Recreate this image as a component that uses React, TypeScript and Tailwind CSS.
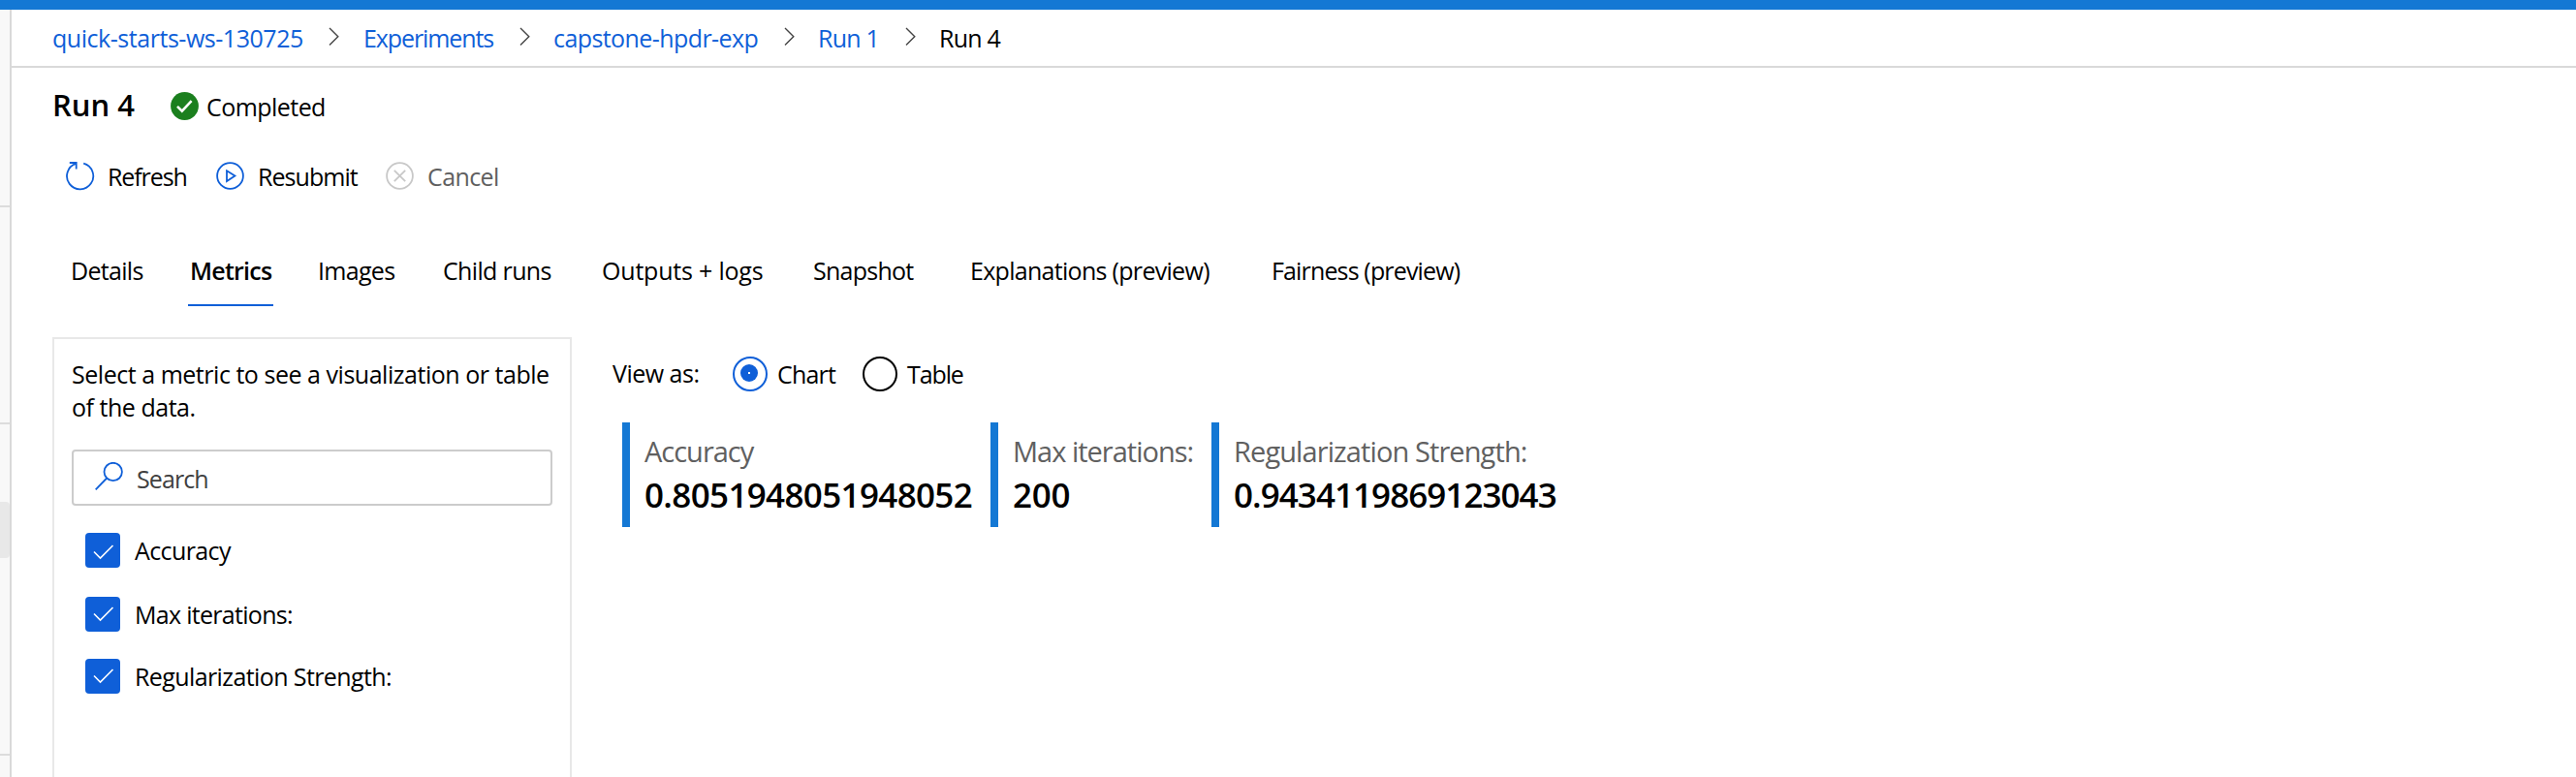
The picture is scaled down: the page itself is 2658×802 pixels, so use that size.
import React from "react";

function Chevron() {
  return (
    <svg className="w-3 h-5 shrink-0" viewBox="0 0 12 20" fill="none" stroke="#444" strokeWidth="1.4">
      <path d="M1 1 L9.8 9.8 L1 18.6" />
    </svg>
  );
}

function CheckBox({ low = false }: { low?: boolean }) {
  return (
    <div className="w-9 h-9 rounded-[4px] bg-[#0f5fd8] shrink-0">
      <svg className="w-9 h-9" viewBox="0 0 36 36" fill="none" stroke="#fff" strokeWidth="1.6">
        <path d={low ? "M9 19.5 L15.5 26 L28.5 13" : "M9 17.5 L15.5 24 L28.5 11"} />
      </svg>
    </div>
  );
}

export default function App() {
  return (
    <div className="w-[2658px] h-[802px] overflow-hidden bg-white text-black font-['Open_Sans','Noto_Sans',sans-serif] text-[25px] leading-[36px] whitespace-nowrap flex flex-col">
      <div className="h-[10px] bg-[#1478d4] shrink-0" />
      <div className="flex flex-1 min-h-0">
        <aside className="w-3 bg-[#f8f8f8] border-r-2 border-[#d9d9d9] shrink-0 flex flex-col">
          <div className="h-[204px] border-b-2 border-[#dcdcdc] shrink-0" />
          <div className="h-[224px] border-b-2 border-[#dcdcdc] shrink-0" />
          <div className="h-[58px] mt-20 rounded-r-[4px] bg-[#e8e8e8] shrink-0" />
          <div className="h-[204px] border-b-2 border-[#dcdcdc] shrink-0" />
        </aside>
        <div className="flex-1 flex flex-col min-w-0">
          <nav className="h-[60px] border-b-2 border-[#d9d9d9] pl-[42px] pt-[11px] flex shrink-0 text-[#0f5fd8]">
            <span className="w-[285px] tracking-[-0.46px]">quick-starts-ws-130725</span>
            <div className="w-[36px] pt-[7px]"><Chevron /></div>
            <span className="w-[161px] tracking-[-1.1px]">Experiments</span>
            <div className="w-[35px] pt-[7px]"><Chevron /></div>
            <span className="w-[238px] tracking-[-0.58px]">capstone-hpdr-exp</span>
            <div className="w-[35px] pt-[7px]"><Chevron /></div>
            <span className="w-[90px] tracking-[-0.8px]">Run 1</span>
            <div className="w-[35px] pt-[7px]"><Chevron /></div>
            <span className="text-black tracking-[-0.8px]">Run 4</span>
          </nav>
          <header className="h-[76px] pl-[42px] pt-[18px] flex shrink-0">
            <h1 className="w-[122px] text-[31px] leading-[40px] font-semibold">Run 4</h1>
            <svg className="w-[29px] h-[29px] mt-[7px] mr-[8px]" viewBox="0 0 29 29">
              <circle cx="14.5" cy="14.5" r="14.4" fill="#1b7f1e" />
              <path d="M7 14.8 L11.8 19.6 L21.6 9.2" fill="none" stroke="#fff" strokeWidth="2.6" />
            </svg>
            <span className="mt-[4px] tracking-[-0.55px]">Completed</span>
          </header>
          <div className="h-[84px] pl-[56px] pt-[18px] flex shrink-0">
            <svg className="w-[30px] h-[30px] mt-[3px] mr-[13px]" viewBox="0 0 30 30" fill="none" stroke="#0f5fd8" strokeWidth="1.8">
              <path d="M18.2 1.6 A13.6 13.6 0 1 1 10.4 1.8" />
              <path d="M3.8 1 H10.7 V7.4" />
            </svg>
            <span className="w-[112px] tracking-[-1.1px]">Refresh</span>
            <svg className="w-[29px] h-[29px] mt-[3px] mr-[14px]" viewBox="0 0 29 29" fill="none" stroke="#0f5fd8" strokeWidth="1.8">
              <circle cx="14.5" cy="14.5" r="13.4" />
              <path d="M11 9.3 L19.4 14.6 L11 20 Z" />
            </svg>
            <span className="w-[132px] tracking-[-0.95px]">Resubmit</span>
            <svg className="w-[29px] h-[29px] mt-[3px] mr-[14px]" viewBox="0 0 29 29" fill="none" stroke="#c8c8c8" strokeWidth="1.8">
              <circle cx="14.5" cy="14.5" r="13.4" />
              <path d="M8.8 8.8 L20.2 20.2 M20.2 8.8 L8.8 20.2" />
            </svg>
            <span className="text-[#606060] tracking-[-0.6px]">Cancel</span>
          </div>
          <div className="h-[118px] pl-[60px] pt-[31px] flex shrink-0">
            <span className="w-[122px] pl-px tracking-[-0.7px]">Details</span>
            <span className="w-[88px] h-[55px] mr-[46px] pl-[2px] border-b-2 border-[#0f5fd8] font-semibold tracking-[-0.75px]">Metrics</span>
            <span className="w-[129px] tracking-[-0.7px]">Images</span>
            <span className="w-[164px] tracking-[-0.65px]">Child runs</span>
            <span className="w-[218px] tracking-[-0.2px]">Outputs + logs</span>
            <span className="w-[162px] tracking-[-0.75px]">Snapshot</span>
            <span className="w-[311px] tracking-[-0.7px]">Explanations (preview)</span>
            <span className="tracking-[-0.85px]">Fairness (preview)</span>
          </div>
          <main className="flex flex-1 min-h-0 pl-[42px]">
            <section className="w-[536px] border-2 border-b-0 border-[#e8e8e8] shrink-0 pl-[18px] pt-[19px]">
              <p className="leading-[34px] tracking-[-0.47px]">Select a metric to see a visualization or table<br />of the data.</p>
              <div className="w-[496px] h-[58px] mt-[27px] border-2 border-[#ccc] rounded-[4px] flex pl-[22px] pt-[10px] text-[#404040]">
                <svg className="w-[30px] h-[30px] mt-[1px] mr-[13px]" viewBox="0 0 30 30" fill="none" stroke="#0f5fd8" strokeWidth="1.8">
                  <circle cx="18.7" cy="10" r="9.2" />
                  <path d="M12.2 16.5 L0.7 28.4" />
                </svg>
                <span className="tracking-[-0.9px]">Search</span>
              </div>
              <div className="flex flex-col pl-[14px] pt-[28px]">
                <div className="flex h-[66px] gap-[15px]"><CheckBox low /><span className="tracking-[-0.6px]">Accuracy</span></div>
                <div className="flex h-[64px] gap-[15px]"><CheckBox /><span className="tracking-[-0.7px]">Max iterations:</span></div>
                <div className="flex gap-[15px]"><CheckBox /><span className="tracking-[-0.6px]">Regularization Strength:</span></div>
              </div>
            </section>
            <section className="pl-[42px] pt-[20px] flex flex-col">
              <div className="h-[68px] flex">
                <span className="w-[124px] -mt-px tracking-[-0.5px]">View as:</span>
                <svg className="w-9 h-9 mr-[10px]" viewBox="0 0 36 36" fill="none">
                  <circle cx="18" cy="18" r="17" stroke="#0f5fd8" strokeWidth="2" />
                  <circle cx="17" cy="17" r="9" fill="#0f5fd8" />
                  <rect x="16" y="16" width="2" height="2" fill="#fff" />
                </svg>
                <span className="w-[88px] tracking-[-0.8px]">Chart</span>
                <svg className="w-9 h-9 mr-[10px]" viewBox="0 0 36 36" fill="none">
                  <circle cx="18" cy="18" r="17" stroke="#000" strokeWidth="2" />
                </svg>
                <span className="tracking-[-1.1px]">Table</span>
              </div>
              <div className="flex pl-[10px]">
                <div className="w-[380px] h-[108px] border-l-8 border-[#1478d4] pl-[15px] pt-[10px]">
                  <div className="text-[29px] leading-[40px] text-[#606060] tracking-[-1px]">Accuracy</div>
                  <div className="text-[35px] leading-[50px] font-semibold tracking-[-0.65px]">0.8051948051948052</div>
                </div>
                <div className="w-[228px] h-[108px] border-l-8 border-[#1478d4] pl-[15px] pt-[10px]">
                  <div className="text-[29px] leading-[40px] text-[#606060] tracking-[-1px]">Max iterations:</div>
                  <div className="text-[35px] leading-[50px] font-semibold tracking-[-0.2px]">200</div>
                </div>
                <div className="h-[108px] border-l-8 border-[#1478d4] pl-[15px] pt-[10px]">
                  <div className="text-[29px] leading-[40px] text-[#606060] tracking-[-0.9px]">Regularization Strength:</div>
                  <div className="text-[35px] leading-[50px] font-semibold tracking-[-0.95px]">0.9434119869123043</div>
                </div>
              </div>
            </section>
          </main>
        </div>
      </div>
    </div>
  );
}
